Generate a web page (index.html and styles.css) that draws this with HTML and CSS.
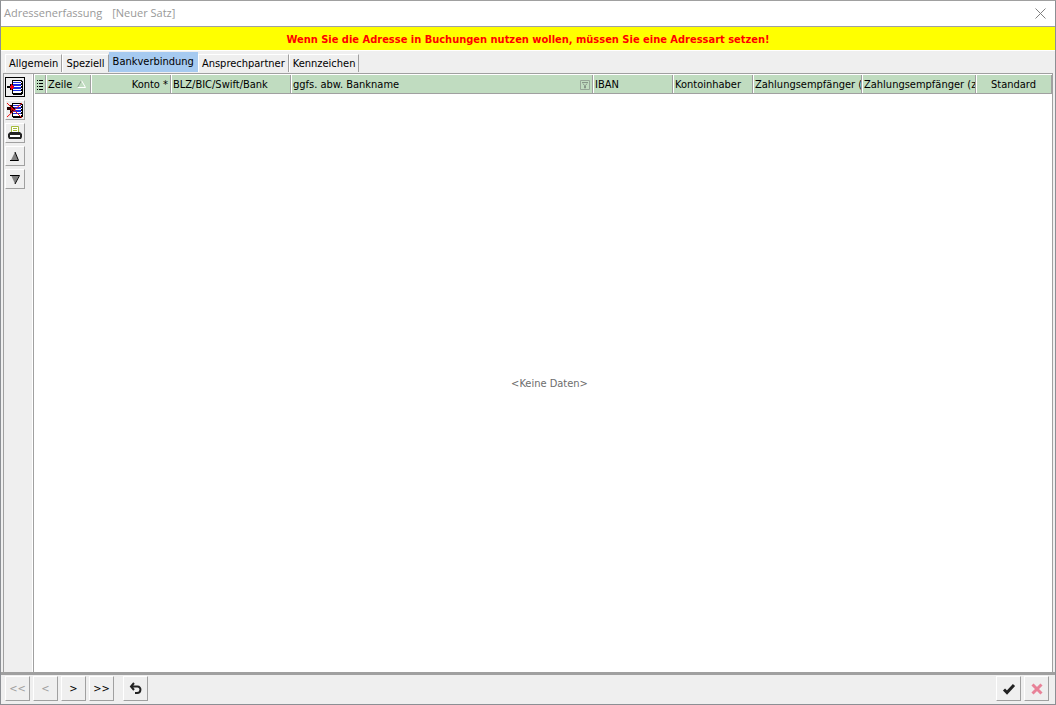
FILE: index.html
```html
<!DOCTYPE html>
<html lang="de">
<head>
<meta charset="utf-8">
<title>Adressenerfassung</title>
<link rel="stylesheet" href="styles.css">
</head>
<body>
<div class="window">
  <header class="titlebar">
    <h1 class="title">Adressenerfassung<span class="record">[Neuer Satz]</span></h1>
    <button class="close" type="button" aria-label="Schließen"><svg width="11" height="11" viewBox="0 0 11 11"><path d="M.5.5l10 10M10.5.5l-10 10" stroke="#808080" fill="none"/></svg></button>
  </header>
  <p class="banner">Wenn Sie die Adresse in Buchungen nutzen wollen, müssen Sie eine Adressart setzen!</p>
  <nav class="tabs" role="tablist">
    <button class="tab" type="button" role="tab">Allgemein</button>
    <button class="tab" type="button" role="tab">Speziell</button>
    <button class="tab active" type="button" role="tab" aria-selected="true">Bankverbindung</button>
    <button class="tab" type="button" role="tab">Ansprechpartner</button>
    <button class="tab" type="button" role="tab">Kennzeichen</button>
  </nav>
  <main class="content">
    <div class="toolbar">
      <button class="tool focused" type="button" aria-label="Zeile einfügen"><svg width="16" height="16" viewBox="0 0 16 16" shape-rendering="crispEdges"><path d="M5 1h10v1h1v13h-1v1H6v-1H5z" fill="#000"/><path d="M6 2h8v12H6z" fill="#fff"/><path d="M6 3h8v1H6zM6 5h8v2H6zM6 8h8v2H6zM6 11h8v1H6z" fill="#1a2be0"/><path d="M14 3h1v1h-1zM14 6h1v1h-1zM14 9h1v1h-1zM14 12h1v1h-1z" fill="#fff"/><path d="M0 7h3V5h2v1h1v1h1v2H6v1H5v1H3V9H0z" fill="#000"/><path d="M3 7h1V5h1v1h1v1h1v2H6v1H5v1H4V9H3z" fill="#f00010"/></svg></button>
      <button class="tool" type="button" aria-label="Zeile löschen"><svg width="16" height="16" viewBox="0 0 16 16"><g shape-rendering="crispEdges"><path d="M5 1h10v1h1v13h-1v1H6v-1H5z" fill="#000"/><path d="M6 2h8v12H6z" fill="#fff"/><path d="M6 3h8v1H6zM6 5h8v2H6zM6 8h8v2H6zM6 11h8v1H6z" fill="#1a2be0"/><path d="M14 3h1v1h-1zM14 6h1v1h-1zM14 9h1v1h-1zM14 12h1v1h-1z" fill="#fff"/><path d="M0 5h3V3h2v1h1v1h1v1h1v2H7v1H6v1H5v1H3V8H0z" fill="#200"/><path d="M4 5h1v1h1v2H5v1H4z" fill="#c00010"/></g><path d="M0 1l15 15M15 1L0 15" stroke="#f01010" fill="none"/></svg></button>
      <button class="tool" type="button" aria-label="Drucken"><svg width="16" height="16" viewBox="0 0 16 16"><path d="M4.500 8V1.500h7V8" fill="#fff" stroke="#a5bd3c"/><path d="M6 3.500h4M6 5.500h4" stroke="#a5bd3c"/><path d="M3 7h10l2 2v3l-1 2H2l-1-2V9z" fill="#222"/><path d="M3 10h10v2H3z" fill="#fff"/></svg></button>
      <button class="tool" type="button" aria-label="Nach oben"><svg width="16" height="16" viewBox="0 0 16 16"><path d="M8 4L11 12H4z" fill="#808080"/><path d="M8 4l3.500 8.500H3" stroke="#000" fill="none"/></svg></button>
      <button class="tool" type="button" aria-label="Nach unten"><svg width="16" height="16" viewBox="0 0 16 16"><path d="M4 4h8l-4 9z" fill="#808080"/><path d="M3 4.500h9.500L8 13" stroke="#000" fill="none"/></svg></button>
    </div>
    <section class="grid">
      <table class="bank">
        <colgroup><col class="c-mark"><col class="c-line"><col class="c-std"><col class="c-blz"><col><col class="c-std"><col class="c-std"><col class="c-pay"><col class="c-pay2"><col class="c-last"></colgroup>
        <thead><tr>
          <th class="mark" aria-label="Spalten"><svg width="7" height="10" viewBox="0 0 7 10" shape-rendering="crispEdges"><path d="M0 0h1v1H0zM2 0h4v1H2zM0 3h1v1H0zM2 3h4v1H2zM0 6h1v1H0zM2 6h4v1H2zM0 9h1v1H0zM2 9h4v1H2z" fill="#000"/></svg></th>
          <th>Zeile<svg class="sort" width="9" height="8" viewBox="0 0 9 8"><path d="M.5 7.500L4.500.5" stroke="#8f9f90" fill="none"/><path d="M4.500.5l4 7H.5" stroke="#fff" fill="none"/></svg></th>
          <th class="right">Konto *</th>
          <th>BLZ/BIC/Swift/Bank</th>
          <th><div class="with-filter"><span>ggfs. abw. Bankname</span><svg width="10" height="10" viewBox="0 0 10 10"><path d="M.5.5h9v9h-9z" fill="none" stroke="#96a698"/><path d="M2 2.500h6M3 3.500l1.500 2V8h1V5.500L7 3.500" fill="none" stroke="#869688"/></svg></div></th>
          <th>IBAN</th>
          <th>Kontoinhaber</th>
          <th class="pay">Zahlungsempfänger (</th>
          <th class="pay">Zahlungsempfänger (z</th>
          <th class="center">Standard</th>
        </tr></thead>
      </table>
      <p class="empty">&lt;Keine Daten&gt;</p>
    </section>
  </main>
  <footer class="footer">
    <button class="nav" type="button" disabled>&lt;&lt;</button>
    <button class="nav" type="button" disabled>&lt;</button>
    <button class="nav" type="button">&gt;</button>
    <button class="nav" type="button">&gt;&gt;</button>
    <button class="nav undo" type="button" aria-label="Rückgängig"><svg width="13" height="13" viewBox="0 0 13 13"><path d="M5 1L2 4.500 5 8M2 4.500h6.500c4 0 4 6.500-.5 6.500H6" fill="none" stroke="#222" stroke-width="2"/></svg></button>
    <button class="nav ok" type="button" aria-label="Übernehmen"><svg width="14" height="12" viewBox="0 0 14 12"><path d="M2 6.500l3 3L12 2" fill="none" stroke="#222" stroke-width="3"/></svg></button>
    <button class="nav" type="button" aria-label="Abbrechen"><svg width="12" height="12" viewBox="0 0 12 12"><path d="M1.500 1.500l9 9M10.500 1.500l-9 9" fill="none" stroke="#e88298" stroke-width="3"/></svg></button>
  </footer>
</div>
</body>
</html>
```
FILE: styles.css
```css
* { box-sizing: border-box; }

body {
  margin: 0;
  font-family: "DejaVu Sans Condensed", "DejaVu Sans", sans-serif;
  font-size: 11px;
  color: #000;
}

button { margin: 0; padding: 0; font: inherit; color: inherit; }
svg { display: block; flex: none; }

.window {
  display: flex;
  flex-direction: column;
  height: 100vh;
  background: #efefef;
  border: 1px solid #8c8f94;
  border-top-color: #a0a0a0;
}

.titlebar {
  display: flex;
  align-items: center;
  justify-content: space-between;
  height: 26px;
  padding: 0 9px 1px 3px;
  background: #fff;
  border-bottom: 1px solid #a0a0a0;
}
.title {
  margin: 0;
  font: 11px/22px "Open Sans", sans-serif;
  color: #999;
}
.record { margin-left: 10px; }
.close { border: 0; background: none; }

.banner {
  margin: 0;
  height: 24px;
  line-height: 25px;
  background: #ff0;
  border-bottom: 1px solid #fff;
  color: #f00;
  font-weight: bold;
  text-align: center;
}

.tabs {
  display: flex;
  align-items: flex-end;
  height: 22px;
  padding: 1px 0 1px 4px;
}
.tab {
  height: 18px;
  padding: 0 3px;
  background: #efefef;
  border: 1px solid #fff;
  border-right-color: #a0a0a0;
  border-bottom: 0;
  white-space: nowrap;
}
.tab.active {
  height: 20px;
  padding-bottom: 2px;
  background: #a6caf0;
  border-color: #a6caf0;
}

.content {
  display: flex;
  flex: 1;
  min-height: 0;
  margin: 0 2px;
  border: 1px solid #a0a0a0;
  border-bottom: 0;
}
.toolbar {
  display: flex;
  flex-direction: column;
  gap: 3px;
  width: 30px;
  padding: 3px 0 0 1px;
  border-right: 1px solid #a0a0a0;
  box-shadow: inset -1px 0 #fff;
}
.tool, .nav {
  display: flex;
  align-items: center;
  justify-content: center;
  background: #efefef;
  border: 1px solid #fff;
  border-right-color: #a0a0a0;
  border-bottom-color: #a0a0a0;
}
.tool { width: 20px; height: 20px; }
.tool.focused { border-color: #000; }

.grid {
  display: flex;
  flex: 1;
  flex-direction: column;
  min-width: 0;
  padding: 1px 0 0 1px;
  background: #fff;
}
.bank {
  width: 100%;
  table-layout: fixed;
  border-collapse: separate;
  border-spacing: 0;
}
.c-mark { width: 11px; }
.c-line { width: 45px; }
.c-std { width: 80px; }
.c-blz { width: 120px; }
.c-pay { width: 109px; }
.c-pay2 { width: 114px; }
.c-last { width: 76px; }
.bank th {
  height: 19px;
  padding: 1px 2px 0;
  overflow: hidden;
  background: #c0dcc0;
  border-right: 1px solid #a0a0a0;
  border-bottom: 1px solid #a0a0a0;
  box-shadow: inset 1px 0 #fff;
  font-weight: normal;
  line-height: 17px;
  text-align: left;
  white-space: nowrap;
}
.bank .mark { box-shadow: none; }
.bank .right { text-align: right; }
.bank .center { text-align: center; }
.bank .pay { padding-right: 0; }
.sort { display: inline-block; margin-left: 5px; }
.with-filter { display: flex; align-items: center; justify-content: space-between; }
.empty {
  display: flex;
  flex: 1;
  align-items: center;
  justify-content: center;
  margin: 0;
  padding-left: 12px;
  color: #6d6d6d;
}

.footer {
  display: flex;
  gap: 3px;
  height: 32px;
  padding: 1px 6px 2px 4px;
  border-top: 3px solid #a0a0a0;
}
.nav { width: 25px; height: 25px; }
.nav:disabled { color: #a0a0a0; }
.undo { margin-left: 6px; }
.ok { margin-left: auto; }
```
